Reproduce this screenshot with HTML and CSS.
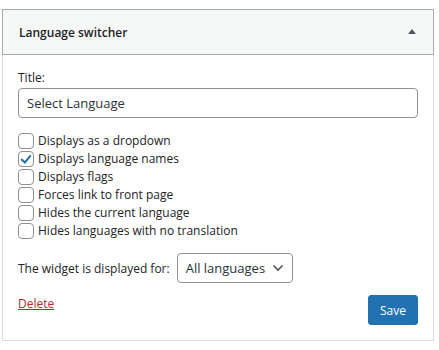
FILE: index.html
```html
<!DOCTYPE html>
<html lang="en">
<head>
    <meta charset="UTF-8">
    <meta name="viewport" content="width=device-width, initial-scale=1.0">
    <title>Language switcher widget</title>
    <link rel="stylesheet" href="styles.css">
</head>
<body>

    <div class="widget" id="widget">
        <div class="widget-top">
            <h3 class="widget-title">Language switcher</h3>
            <span class="toggle-arrow"></span>
        </div>

        <div class="widget-inside">
            <p class="field">
                <label class="field-label" for="widgetTitle">Title:</label>
                <input class="text-input" id="widgetTitle" type="text" value="Select Language">
            </p>

            <ul class="options">
                <li><label><input type="checkbox" class="check"> Displays as a dropdown</label></li>
                <li><label><input type="checkbox" class="check" checked> Displays language names</label></li>
                <li><label><input type="checkbox" class="check"> Displays flags</label></li>
                <li><label><input type="checkbox" class="check"> Forces link to front page</label></li>
                <li><label><input type="checkbox" class="check"> Hides the current language</label></li>
                <li><label><input type="checkbox" class="check"> Hides languages with no translation</label></li>
            </ul>

            <p class="display-for">
                <label for="displayFor">The widget is displayed for:</label>
                <span class="select-box" id="displayFor">All languages
                    <svg class="chevron" width="12" height="8" viewBox="0 0 12 8"><path d="M1.5 1.5 L6 6 L10.5 1.5" fill="none" stroke="#50575e" stroke-width="1.6"/></svg>
                </span>
            </p>

            <div class="widget-actions">
                <a href="#" class="delete-link">Delete</a>
                <button class="save-button" id="saveButton">Save</button>
            </div>
        </div>
    </div>

</body>
</html>
```

FILE: styles.css
```css
body {
    font-family: 'Open Sans', 'Noto Sans', sans-serif;
    font-size: 12px;
    color: #1d2327;
    background-color: #ffffff;
    margin: 0;
    padding: 9px 0 0 2px;
}

.widget {
    width: 432px;
    box-sizing: border-box;
    border: 1px solid #dcdcde;
    background-color: #ffffff;
}

.widget-top {
    display: flex;
    align-items: center;
    justify-content: space-between;
    height: 44px;
    margin: -1px -1px 0 -1px;
    border: 1px solid #a7aaad;
    background-color: #f6f7f7;
    padding: 0 17px 0 16px;
}

.widget-title {
    margin: 0;
    font-size: 12px;
    font-weight: 600;
    color: #1d2327;
}

.toggle-arrow {
    width: 0;
    height: 0;
    border-left: 4px solid transparent;
    border-right: 4px solid transparent;
    border-bottom: 5px solid #50575e;
    margin-top: -1px;
}

.widget-inside {
    padding: 14px 15px 15px 15px;
}

.field {
    margin: 0 0 14px 0;
}

.field-label {
    display: block;
    line-height: 18px;
    margin-bottom: 1px;
}

.text-input {
    display: block;
    width: 100%;
    box-sizing: border-box;
    height: 30px;
    border: 1px solid #8c8f94;
    border-radius: 4px;
    padding: 0 8px;
    font-family: inherit;
    font-size: 13px;
    color: #2c3338;
    margin: 0;
}

.options {
    list-style: none;
    margin: 0;
    padding: 0;
}

.options li {
    height: 18px;
    line-height: 18px;
}

.options label {
    display: flex;
    align-items: center;
}

.check {
    appearance: none;
    width: 16px;
    height: 16px;
    box-sizing: border-box;
    border: 1px solid #8c8f94;
    border-radius: 4px;
    background-color: #fff;
    margin: 0 4px 0 0;
    position: relative;
}

.check:checked::after {
    content: '';
    position: absolute;
    left: 4px;
    top: 1px;
    width: 4px;
    height: 8px;
    border-right: 2px solid #2271b1;
    border-bottom: 2px solid #2271b1;
    transform: rotate(40deg);
}

.display-for {
    display: flex;
    align-items: center;
    margin: 13px 0 0 0;
}

.select-box {
    display: inline-flex;
    align-items: center;
    gap: 7px;
    height: 30px;
    box-sizing: border-box;
    border: 1px solid #8c8f94;
    border-radius: 4px;
    padding: 0 8px 0 8px;
    margin-left: 7px;
    font-size: 13px;
    color: #2c3338;
}

.widget-actions {
    display: flex;
    justify-content: space-between;
    align-items: flex-start;
    margin-top: 12px;
}

.delete-link {
    color: #b32d2e;
    text-decoration: underline;
    margin-top: 0;
}

.save-button {
    background-color: #2271b1;
    border: 1px solid #2271b1;
    color: #ffffff;
    font-family: inherit;
    font-size: 12px;
    height: 30px;
    padding: 0 11px;
    border-radius: 3px;
    cursor: pointer;
}
```
